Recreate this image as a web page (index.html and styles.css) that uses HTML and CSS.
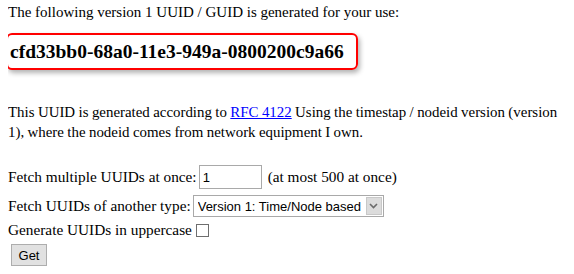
FILE: index.html
```html
<!DOCTYPE html>
<html>
<head>
	<title>UUID Generator</title>
	<link rel="stylesheet" href="styles.css">
</head>
<body>
	<div class="intro">The following version 1 UUID / GUID is generated for your use:</div>
	<div class="uuid">cfd33bb0-68a0-11e3-949a-0800200c9a66</div>

	<p class="about">This UUID is generated according to <a href="#">RFC 4122</a> Using the timestap / nodeid version (version 1), where the nodeid comes from network equipment I own.</p>

	<form class="options">
		<div class="row row-count">
			<span>Fetch multiple UUIDs at once:</span>
			<input type="text" class="count" value="1">
			<span>(at most 500 at once)</span>
		</div>
		<div class="row row-type">
			<span>Fetch UUIDs of another type:</span>
			<span class="select-wrap">
				<select class="type">
					<option>Version 1: Time/Node based</option>
					<option>Version 4: Random</option>
				</select>
				<span class="arrow"><svg width="9" height="6" viewBox="0 0 9 6"><path d="M1 1 L4.5 4.5 L8 1" fill="none" stroke="#6b6b6b" stroke-width="1.6"/></svg></span>
			</span>
		</div>
		<div class="row row-upper">
			<span>Generate UUIDs in uppercase</span>
			<span class="check"></span>
		</div>
		<div class="row row-get">
			<button type="button" class="get">Get</button>
		</div>
	</form>
</body>
</html>
```

FILE: styles.css
```css
body {
	margin: 2px 8px 0;
	font-family: "Liberation Serif", "Times New Roman", serif;
	font-size: 16px;
	line-height: 20px;
	color: #000;
	background: #fff;
}

.intro {
	height: 20px;
	font-size: 15px;
}

.uuid {
	width: 346px;
	height: 33px;
	margin: 11px 0 0 -2px;
	padding: 0 0 0 2px;
	border: 2px solid #f00;
	border-radius: 6px;
	box-shadow: 2px 3px 5px rgba(0, 0, 0, 0.3);
	font-size: 19.5px;
	font-weight: bold;
	line-height: 33px;
}

.about {
	margin: 32px 0 0;
	font-size: 14.9px;
	word-spacing: -0.3px;
}

.about a {
	color: #0000ff;
}

.options {
	margin-top: 23px;
	font-size: 15.3px;
}

.row {
	display: flex;
	align-items: center;
}

.row-count {
	height: 24px;
	margin-bottom: 6px;
}

.row-type {
	height: 22px;
	margin-bottom: 3px;
}

.row-upper {
	height: 20px;
	margin-bottom: 4px;
}

.row-get {
	height: 22px;
}

.count {
	box-sizing: border-box;
	width: 63px;
	height: 24px;
	margin: 0 6px 0 2px;
	padding: 1px 3px;
	border: 1px solid #a9a9a9;
	font-family: "Liberation Sans", Arial, sans-serif;
	font-size: 13px;
}

.select-wrap {
	position: relative;
	display: inline-block;
	height: 22px;
	margin-left: 2px;
}

.type {
	-webkit-appearance: none;
	appearance: none;
	box-sizing: border-box;
	width: 191px;
	height: 22px;
	padding: 0 0 0 4px;
	border: 1px solid #a9a9a9;
	border-radius: 0;
	background: #fff;
	color: #000;
	font-family: "Liberation Sans", Arial, sans-serif;
	font-size: 13px;
}

.arrow {
	position: absolute;
	top: 2px;
	right: 2px;
	width: 16px;
	height: 18px;
	background: #dcdcdc;
	border: 1px solid #c8c8c8;
	box-sizing: border-box;
	display: flex;
	align-items: center;
	justify-content: center;
}

.check {
	display: inline-block;
	width: 11px;
	height: 11px;
	margin-left: 4px;
	border: 1px solid #6e6e6e;
	background: #fff;
}

.get {
	box-sizing: border-box;
	width: 36px;
	height: 22px;
	margin-left: 3px;
	padding: 0;
	border: 1px solid #adadad;
	border-radius: 0;
	background: #e1e1e1;
	font-family: "Liberation Sans", Arial, sans-serif;
	font-size: 13px;
	color: #000;
}
```
